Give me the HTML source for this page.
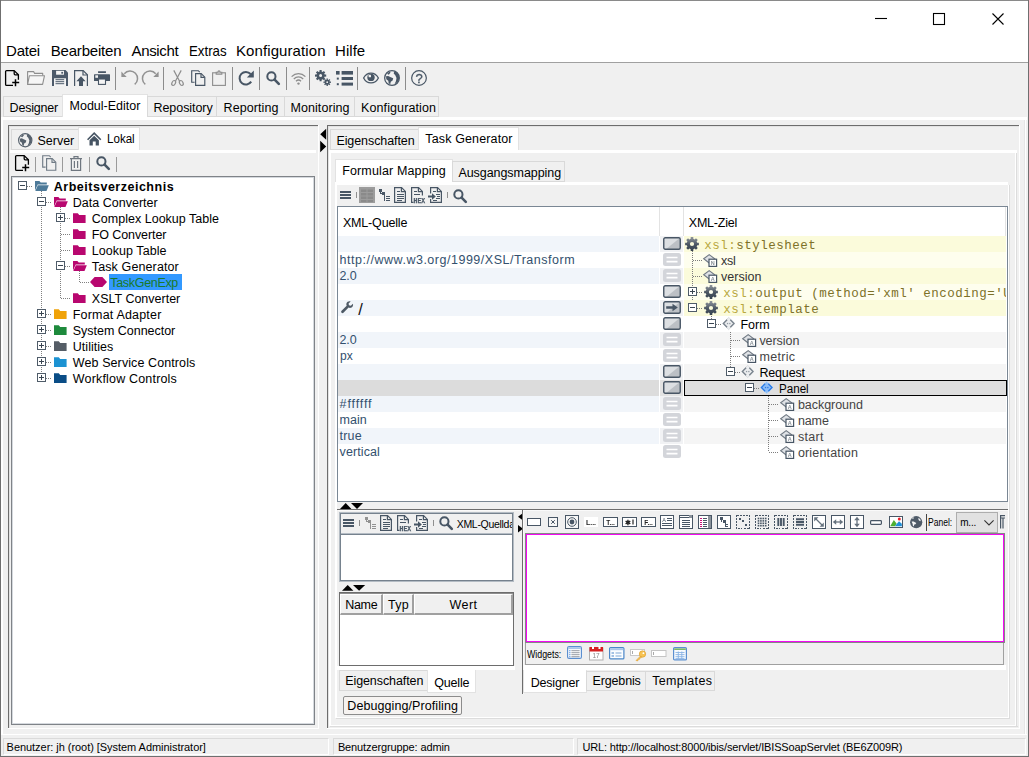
<!DOCTYPE html>
<html><head><meta charset="utf-8"><title>Modul-Editor</title>
<style>
*{box-sizing:border-box;margin:0;padding:0}
html,body{width:1029px;height:757px;overflow:hidden;background:#f0f0f0}
body{font-family:"Liberation Sans",sans-serif;font-size:12.5px;color:#000;position:relative}
.a{position:absolute}
.t{position:absolute;white-space:pre}
svg{position:absolute;overflow:visible}
</style></head><body>
<div class="a" style="left:0px;top:0px;width:1029px;height:62px;background:#fff;"></div><div class="a" style="left:0px;top:62px;width:1029px;height:1px;background:#a0a0a0;"></div><svg style="left:870px;top:8px" width="140" height="22" viewBox="870 8 140 22"><g stroke="#000" stroke-width="1.1" fill="none"><path d="M875 18.5H887"/><rect x="933.5" y="13.5" width="11" height="11"/><path d="M992.5 13.5l11 11M1003.5 13.5l-11 11"/></g></svg><span class="t" id="t0" style="left:6.1px;top:42.70px;font-size:15px;line-height:15px;color:#000;letter-spacing:-0.258px;">Datei</span><span class="t" id="t1" style="left:50.8px;top:42.70px;font-size:15px;line-height:15px;color:#000;letter-spacing:-0.207px;">Bearbeiten</span><span class="t" id="t2" style="left:131.5px;top:42.70px;font-size:15px;line-height:15px;color:#000;letter-spacing:-0.334px;">Ansicht</span><span class="t" id="t3" style="left:188.9px;top:42.70px;font-size:15px;line-height:15px;color:#000;transform:scaleX(0.8844);transform-origin:0 0;">Extras</span><span class="t" id="t4" style="left:236px;top:42.70px;font-size:15px;line-height:15px;color:#000;letter-spacing:0.091px;">Konfiguration</span><span class="t" id="t5" style="left:335px;top:42.70px;font-size:15px;line-height:15px;color:#000;letter-spacing:0.046px;">Hilfe</span><svg style="left:5px;top:70px;" width="15" height="17" viewBox="0 0 15 17"><g fill="none" stroke="#000" stroke-width="1.3" stroke-linejoin="round"><path d="M8 15.400H1.600a1 1 0 0 1-1-1V1.600a1 1 0 0 1 1-1h7.600l4.200 4.200v4.900"/><path d="M9.200.8v3a1 1 0 0 0 1 1h3"/><path d="M7.200 12.500h7M10.500 9.300v6.900" stroke-width="1.500"/></g></svg><svg style="left:27px;top:71px;" width="18" height="14" viewBox="0 0 18 14"><g fill="#f6f6f6" stroke="#8e8e8e" stroke-width="1.100" stroke-linejoin="round"><path d="M.6 13.400V.6h6l1 1.800h8.100v2.400"/><path d="M.6 13.400L2.400 4.700h15.100L15.600 13.400z"/></g></svg><svg style="left:52px;top:70px;" width="16" height="16" viewBox="0 0 16 16"><path d="M0 0h13.500L16 2.500V16H0z" fill="#4c5a6a"/><rect x="4.100" y=".8" width="7.900" height="3.900" fill="#f4f4f4"/><rect x="9.300" y="1.900" width="1.800" height="1.800" fill="#4c5a6a"/><rect x="2" y="8.300" width="12" height="7.700" fill="#f4f4f4"/><path d="M3.500 9.700h8.700M3.500 11.700h8.700M3.500 13.700h8.700" stroke="#4c5a6a" stroke-width="1"/></svg><svg style="left:74px;top:70px;" width="14" height="16" viewBox="0 0 14 16"><g fill="none" stroke="#485665" stroke-width="1.2"><path d="M.6 16V.6h8.6l4.2 4.2V16"/><path d="M9 .8v4.2h4.2"/></g><path d="M7 6.2l4.6 5H9V16H5v-4.8H2.4z" fill="#485665"/></svg><svg style="left:94px;top:71px;" width="16" height="14" viewBox="0 0 16 14"><rect x="4" y=".2" width="8" height="1.800" rx=".4" fill="#485665"/><rect x="0" y="3.200" width="16" height="6.900" rx=".6" fill="#485665"/><rect x="1.300" y="4.300" width="2.700" height="2.500" fill="#f0f0f0"/><rect x="4.500" y="8" width="7" height="5.400" fill="#f4f4f4" stroke="#485665" stroke-width="1.100"/></svg><div class="a" style="left:115px;top:67px;width:1px;height:23px;background:#8c8c8c;"></div><svg style="left:120.5px;top:70px;" width="17" height="16" viewBox="0 0 17 16"><g><path d="M3.300 3.700A7.500 7.500 0 1 1 13.700 14.400" fill="none" stroke="#929292" stroke-width="1.500"/><path d="M.4 1.400V7.100H5.700z" fill="#929292"/></g></svg><svg style="left:141.5px;top:70px;" width="17" height="16" viewBox="0 0 17 16"><g transform="translate(17,0) scale(-1,1)"><path d="M3.300 3.700A7.500 7.500 0 1 1 13.700 14.400" fill="none" stroke="#929292" stroke-width="1.500"/><path d="M.4 1.400V7.100H5.700z" fill="#929292"/></g></svg><div class="a" style="left:163px;top:67px;width:1px;height:23px;background:#8c8c8c;"></div><svg style="left:171px;top:70px;" width="13" height="16" viewBox="0 0 13 16"><g fill="none" stroke="#8e8e8e" stroke-width="1.200"><path d="M2.800.4L8.600 11.200M10.200.4L4.400 11.200"/><ellipse cx="2.700" cy="13" rx="1.700" ry="2.600" transform="rotate(28 2.700 13)"/><ellipse cx="10.300" cy="13" rx="1.700" ry="2.600" transform="rotate(-28 10.300 13)"/></g></svg><svg style="left:191px;top:70px;" width="15" height="16" viewBox="0 0 15 16" preserveAspectRatio="none"><g fill="none" stroke="#485665" stroke-width="1.150"><path d="M3.6 12.2H.7V.7h6.6l1.4 1.4"/><path d="M4.6 15.3V3.6h5.6l3.6 3.6v8.1z"/><path d="M10 3.8v3.6h3.6"/></g></svg><svg style="left:212px;top:70px;" width="14" height="16" viewBox="0 0 14 16"><g fill="none" stroke="#909090" stroke-width="1.150"><rect x=".6" y="2.800" width="12.800" height="12.600"/><path d="M4.200 4.200V2.200h1.600C6 .4 8 .4 8.200 2.200h1.600v2z" fill="#c4c4c4"/></g></svg><div class="a" style="left:232px;top:67px;width:1px;height:23px;background:#8c8c8c;"></div><svg style="left:238px;top:70.3px;" width="16" height="16" viewBox="0 0 16 16"><path d="M13.2 11.6A6.3 6.3 0 1 1 12.6 4" fill="none" stroke="#485665" stroke-width="2"/><path d="M15.8.4v7H8.8z" fill="#485665"/></svg><div class="a" style="left:259px;top:67px;width:1px;height:23px;background:#8c8c8c;"></div><svg style="left:266px;top:70.5px;" width="14" height="14" viewBox="0 0 14 14"><svg viewBox="0 0 14 14" width="14" height="14" style="position:static"><circle cx="5.4" cy="5.4" r="4.1" fill="none" stroke="#485665" stroke-width="2"/><path d="M8.6 8.6l4.2 4.2" stroke="#485665" stroke-width="2.6" stroke-linecap="round"/></svg></svg><div class="a" style="left:286px;top:67px;width:1px;height:23px;background:#8c8c8c;"></div><svg style="left:291px;top:71.5px;" width="15" height="13" viewBox="0 0 15 13"><g fill="none" stroke="#8e8e8e" stroke-width="1.300"><path d="M.6 4.600C4.600.6 10.400.6 14.400 4.600"/><path d="M2.800 7C5.600 4.200 9.400 4.200 12.200 7"/><path d="M5 9.200c1.600-1.600 3.400-1.600 5 0"/></g><circle cx="7.500" cy="11.600" r="1.200" fill="#8e8e8e"/></svg><div class="a" style="left:309px;top:67px;width:1px;height:23px;background:#8c8c8c;"></div><svg style="left:314.5px;top:70px;" width="16" height="16" viewBox="0 0 16 16"><path d="M11.20 4.53L11.20 6.67L9.68 6.61L9.20 7.77L10.31 8.80L8.80 10.31L7.77 9.20L6.61 9.68L6.67 11.20L4.53 11.20L4.59 9.68L3.43 9.20L2.40 10.31L0.89 8.80L2.00 7.77L1.52 6.61L0.00 6.67L0.00 4.53L1.52 4.59L2.00 3.43L0.89 2.40L2.40 0.89L3.43 2.00L4.59 1.52L4.53 0.00L6.67 0.00L6.61 1.52L7.77 2.00L8.80 0.89L10.31 2.40L9.20 3.43L9.68 4.59zM4.10 5.60a1.50 1.50 0 1 0 3.00 0a1.50 1.50 0 1 0 -3.00 0z" fill="#485665" fill-rule="evenodd"/><path d="M15.93 11.49L15.93 12.91L14.72 12.83L14.43 13.54L15.34 14.34L14.34 15.34L13.54 14.43L12.83 14.72L12.91 15.93L11.49 15.93L11.57 14.72L10.86 14.43L10.06 15.34L9.06 14.34L9.97 13.54L9.68 12.83L8.47 12.91L8.47 11.49L9.68 11.57L9.97 10.86L9.06 10.06L10.06 9.06L10.86 9.97L11.57 9.68L11.49 8.47L12.91 8.47L12.83 9.68L13.54 9.97L14.34 9.06L15.34 10.06L14.43 10.86L14.72 11.57zM11.30 12.20a0.90 0.90 0 1 0 1.80 0a0.90 0.90 0 1 0 -1.80 0z" fill="#485665" fill-rule="evenodd"/></svg><svg style="left:336px;top:71px;" width="17" height="15" viewBox="0 0 17 15"><g fill="#485665"><rect x="0" y="0" width="3.6" height="3.6"/><rect x="5.6" y="0" width="11.4" height="3.6"/><rect x=".8" y="6.6" width="2" height="2"/><rect x="5.6" y="6" width="11.4" height="3"/><rect x=".8" y="12.2" width="2" height="2"/><rect x="5.6" y="11.6" width="11.4" height="3"/></g></svg><div class="a" style="left:357px;top:67px;width:1px;height:23px;background:#8c8c8c;"></div><svg style="left:363px;top:71.8px;" width="16" height="12" viewBox="0 0 16 12"><path d="M.6 6C4-.6 12-.6 15.400 6 12 12.600 4 12.600.6 6z" fill="#f0f0f0" stroke="#485665" stroke-width="1.300"/><circle cx="8" cy="5.400" r="3.700" fill="#485665"/><rect x="5.600" y="2.800" width="2.400" height="2.400" rx=".5" fill="#f0f0f0"/></svg><svg style="left:384px;top:70px;" width="16" height="16" viewBox="0 0 16 16"><svg viewBox="0 0 16 16" width="16" height="16" style="position:static"><circle cx="8" cy="8" r="7.350" fill="#f0f0f0" stroke="#485665" stroke-width="1.250"/><path d="M3 3.800L5.400 1.700 6.600 2.600 4.800 4.700z" fill="#485665"/><path d="M2 6.300L4.200 5.900 6.200 7 9.200 8.200 8.600 10.400 6.800 11.700 6.200 14.300 4.700 13.300 4.300 10.700 2.300 9.300z" fill="#485665"/><path d="M10.200 1.200L9.700 3.500 11.300 5.300 12.500 8 12 11 10.400 14.400C13.400 12.800 15.200 10.800 15.200 8 15.200 4.800 13.200 2.200 10.200 1.200z" fill="#485665"/></svg></svg><div class="a" style="left:405px;top:67px;width:1px;height:23px;background:#8c8c8c;"></div><svg style="left:411.4px;top:70px;will-change:transform" width="16" height="16" viewBox="0 0 16 16"><circle cx="8" cy="8" r="7.350" fill="none" stroke="#485665" stroke-width="1.200"/><text x="8" y="12.700" text-anchor="middle" font-family="Liberation Sans,sans-serif" font-size="13" fill="#485665" stroke="#485665" stroke-width=".3">?</text></svg><div class="a" style="left:1px;top:117px;width:1026px;height:3px;background:#fff;"></div><div class="a" style="left:1px;top:117px;width:2px;height:618px;background:#fff;"></div><div class="a" style="left:1024px;top:120px;width:1px;height:615px;background:#e6e6e6;"></div><div class="a" style="left:1025px;top:117px;width:1px;height:618px;background:#fff;"></div><div class="a" style="left:1px;top:734px;width:1026px;height:1px;background:#fff;"></div><div class="a" style="left:3px;top:96px;width:60px;height:21px;background:#f0f0f0;border:1px solid #d9d9d9;"></div><span class="t" id="t6" style="left:9.6px;top:102.12px;font-size:12.5px;line-height:12.5px;color:#000;letter-spacing:-0.204px;">Designer</span><div class="a" style="left:62px;top:94px;width:86px;height:23px;background:#fff;border:1px solid #e2e2e2;border-bottom:none;"></div><span class="t" id="t7" style="left:69.5px;top:99.92px;font-size:12.5px;line-height:12.5px;color:#000;letter-spacing:0.011px;">Modul-Editor</span><div class="a" style="left:147px;top:96px;width:70px;height:21px;background:#f0f0f0;border:1px solid #d9d9d9;"></div><span class="t" id="t8" style="left:153.5px;top:102.12px;font-size:12.5px;line-height:12.5px;color:#000;letter-spacing:-0.061px;">Repository</span><div class="a" style="left:216px;top:96px;width:69px;height:21px;background:#f0f0f0;border:1px solid #d9d9d9;"></div><span class="t" id="t9" style="left:223.5px;top:102.12px;font-size:12.5px;line-height:12.5px;color:#000;letter-spacing:0.100px;">Reporting</span><div class="a" style="left:284px;top:96px;width:71px;height:21px;background:#f0f0f0;border:1px solid #d9d9d9;"></div><span class="t" id="t10" style="left:290.5px;top:102.12px;font-size:12.5px;line-height:12.5px;color:#000;letter-spacing:0.069px;">Monitoring</span><div class="a" style="left:354px;top:96px;width:85px;height:21px;background:#f0f0f0;border:1px solid #d9d9d9;"></div><span class="t" id="t11" style="left:361px;top:102.12px;font-size:12.5px;line-height:12.5px;color:#000;letter-spacing:0.111px;">Konfiguration</span><div class="a" style="left:8px;top:125px;width:311px;height:1px;background:#6d6d6d;"></div><div class="a" style="left:8px;top:125px;width:1px;height:604px;background:#6d6d6d;"></div><div class="a" style="left:9px;top:126px;width:309px;height:1px;background:#e3e3e3;"></div><div class="a" style="left:9px;top:126px;width:1px;height:602px;background:#e3e3e3;"></div><div class="a" style="left:8px;top:728px;width:311px;height:1px;background:#fff;"></div><div class="a" style="left:318px;top:125px;width:1px;height:604px;background:#fff;"></div><div class="a" style="left:10px;top:150px;width:306px;height:3px;background:#fff;"></div><div class="a" style="left:11px;top:129px;width:68px;height:21px;background:#f0f0f0;border:1px solid #d9d9d9;"></div><svg style="left:18px;top:133px;" width="14.5" height="14.5" viewBox="0 0 14.5 14.5"><svg viewBox="0 0 16 16" width="14.5" height="14.5" style="position:static"><circle cx="8" cy="8" r="7.350" fill="#f0f0f0" stroke="#56616d" stroke-width="1.250"/><path d="M3 3.800L5.400 1.700 6.600 2.600 4.800 4.700z" fill="#56616d"/><path d="M2 6.300L4.200 5.900 6.200 7 9.200 8.200 8.600 10.400 6.800 11.700 6.200 14.300 4.700 13.300 4.300 10.700 2.300 9.300z" fill="#56616d"/><path d="M10.200 1.200L9.700 3.500 11.300 5.300 12.500 8 12 11 10.400 14.400C13.400 12.800 15.200 10.800 15.200 8 15.200 4.800 13.200 2.200 10.200 1.200z" fill="#56616d"/></svg></svg><span class="t" id="t12" style="left:37.4px;top:135.32px;font-size:12.5px;line-height:12.5px;color:#000;letter-spacing:0.014px;">Server</span><div class="a" style="left:78px;top:127px;width:62px;height:23px;background:#fff;border:1px solid #e2e2e2;border-bottom:none;"></div><svg style="left:87px;top:131.7px;" width="14.4" height="13.4" viewBox="0 0 14.4 13.4"><path d="M.6 7.700L7.200 1.100l6.600 6.600" fill="none" stroke="#465463" stroke-width="1.600"/><path d="M2.500 8.300L7.200 3.700l4.700 4.600v5.100H8.700V9.400H5.800v4H2.500z" fill="#465463"/></svg><span class="t" id="t13" style="left:106.6px;top:133.42px;font-size:12.5px;line-height:12.5px;color:#000;transform:scaleX(0.9267);transform-origin:0 0;">Lokal</span><svg style="left:15px;top:155px;" width="15" height="17" viewBox="0 0 15 17"><g fill="none" stroke="#000" stroke-width="1.3" stroke-linejoin="round"><path d="M8 15.400H1.600a1 1 0 0 1-1-1V1.600a1 1 0 0 1 1-1h7.600l4.200 4.200v4.900"/><path d="M9.200.8v3a1 1 0 0 0 1 1h3"/><path d="M7.200 12.500h7M10.500 9.300v6.900" stroke-width="1.500"/></g></svg><div class="a" style="left:35px;top:157px;width:1px;height:15px;background:#9a9a9a;"></div><svg style="left:42px;top:155px;" width="14.4" height="15.36" viewBox="0 0 14.4 15.36" preserveAspectRatio="none"><g fill="none" stroke="#707b86" stroke-width="1.150"><path d="M3.6 12.2H.7V.7h6.6l1.4 1.4"/><path d="M4.6 15.3V3.6h5.6l3.6 3.6v8.1z"/><path d="M10 3.8v3.6h3.6"/></g></svg><div class="a" style="left:62px;top:157px;width:1px;height:15px;background:#9a9a9a;"></div><svg style="left:70px;top:155.5px;" width="12" height="15" viewBox="0 0 12 15"><g fill="none" stroke="#6f7780" stroke-width="1.200"><path d="M0 2.600h12M4 2.400V.6h4v1.800"/><path d="M1.400 2.800v11.600h9.200V2.800"/><path d="M4.400 5v7M7.600 5v7"/></g></svg><div class="a" style="left:89px;top:157px;width:1px;height:15px;background:#9a9a9a;"></div><svg style="left:96px;top:155.5px;" width="14" height="14" viewBox="0 0 14 14"><svg viewBox="0 0 14 14" width="14" height="14" style="position:static"><circle cx="5.4" cy="5.4" r="4.1" fill="none" stroke="#485665" stroke-width="2"/><path d="M8.6 8.6l4.2 4.2" stroke="#485665" stroke-width="2.6" stroke-linecap="round"/></svg></svg><div class="a" style="left:116px;top:157px;width:1px;height:15px;background:#9a9a9a;"></div><div class="a" style="left:11px;top:176px;width:304px;height:549px;background:#fff;border:1px solid #7f8388;"></div><div class="a" style="left:12px;top:177px;width:302px;height:547px;border:1px solid #d5d9de;"></div><div class="a" style="left:41px;top:191px;width:1px;height:187px;background-image:repeating-linear-gradient(180deg,#808080 0 1px,transparent 1px 2px);"></div><div class="a" style="left:60px;top:207px;width:1px;height:91px;background-image:repeating-linear-gradient(180deg,#808080 0 1px,transparent 1px 2px);"></div><div class="a" style="left:79px;top:271px;width:1px;height:11px;background-image:repeating-linear-gradient(180deg,#808080 0 1px,transparent 1px 2px);"></div><div class="a" style="left:27px;top:186px;width:6px;height:1px;background-image:repeating-linear-gradient(90deg,#808080 0 1px,transparent 1px 2px);"></div><svg style="left:34.5px;top:181px;" width="14" height="10" viewBox="0 0 14 10"><path d="M0 9.600V0h4.400l1.300 1.600h6.100V3.500H2.700z" fill="#4d7a99"/><path d="M.3 10L2.800 4.300h11L11.500 10z" fill="#4d7a99"/></svg><span class="t" id="t14" style="left:53.8px;top:180.92px;font-size:12.5px;line-height:12.5px;color:#000;font-weight:bold;letter-spacing:0.508px;">Arbeitsverzeichnis</span><div class="a" style="left:46px;top:202px;width:6px;height:1px;background-image:repeating-linear-gradient(90deg,#808080 0 1px,transparent 1px 2px);"></div><svg style="left:53.5px;top:197px;" width="14" height="10" viewBox="0 0 14 10"><path d="M0 9.600V0h4.400l1.300 1.600h6.100V3.500H2.700z" fill="#b8076f"/><path d="M.3 10L2.800 4.300h11L11.500 10z" fill="#b8076f"/></svg><span class="t" id="t15" style="left:72.8px;top:196.92px;font-size:12.5px;line-height:12.5px;color:#000;letter-spacing:0.010px;">Data Converter</span><div class="a" style="left:65px;top:218px;width:6px;height:1px;background-image:repeating-linear-gradient(90deg,#808080 0 1px,transparent 1px 2px);"></div><svg style="left:72.7px;top:213px;" width="12.6" height="10" viewBox="0 0 12.6 10"><path d="M0 .3h4.800l1.400 1.700h6.400V10H0z" fill="#b8076f"/></svg><span class="t" id="t16" style="left:91.8px;top:212.92px;font-size:12.5px;line-height:12.5px;color:#000;letter-spacing:0.014px;">Complex Lookup Table</span><div class="a" style="left:61px;top:234px;width:10px;height:1px;background-image:repeating-linear-gradient(90deg,#808080 0 1px,transparent 1px 2px);"></div><svg style="left:72.7px;top:229px;" width="12.6" height="10" viewBox="0 0 12.6 10"><path d="M0 .3h4.800l1.400 1.700h6.400V10H0z" fill="#b8076f"/></svg><span class="t" id="t17" style="left:91.8px;top:228.92px;font-size:12.5px;line-height:12.5px;color:#000;letter-spacing:-0.102px;">FO Converter</span><div class="a" style="left:61px;top:250px;width:10px;height:1px;background-image:repeating-linear-gradient(90deg,#808080 0 1px,transparent 1px 2px);"></div><svg style="left:72.7px;top:245px;" width="12.6" height="10" viewBox="0 0 12.6 10"><path d="M0 .3h4.800l1.400 1.700h6.400V10H0z" fill="#b8076f"/></svg><span class="t" id="t18" style="left:91.8px;top:244.92px;font-size:12.5px;line-height:12.5px;color:#000;letter-spacing:0.042px;">Lookup Table</span><div class="a" style="left:65px;top:266px;width:6px;height:1px;background-image:repeating-linear-gradient(90deg,#808080 0 1px,transparent 1px 2px);"></div><svg style="left:72.5px;top:261px;" width="14" height="10" viewBox="0 0 14 10"><path d="M0 9.600V0h4.400l1.300 1.600h6.100V3.500H2.700z" fill="#b8076f"/><path d="M.3 10L2.800 4.300h11L11.500 10z" fill="#b8076f"/></svg><span class="t" id="t19" style="left:91.8px;top:260.92px;font-size:12.5px;line-height:12.5px;color:#000;letter-spacing:0.118px;">Task Generator</span><div class="a" style="left:80px;top:282px;width:9px;height:1px;background-image:repeating-linear-gradient(90deg,#808080 0 1px,transparent 1px 2px);"></div><svg style="left:90px;top:277px;" width="17" height="10" viewBox="0 0 17 10"><path d="M0 5L4.600 0h7.800L17 5l-4.600 5H4.600z" fill="#b8076f"/></svg><div class="a" style="left:109px;top:274px;width:73px;height:16px;background:#3399ff;"></div><span class="t" id="t20" style="left:110.3px;top:276.92px;font-size:12.5px;line-height:12.5px;color:#1a7a2a;letter-spacing:-0.319px;">TaskGenExp</span><div class="a" style="left:61px;top:298px;width:10px;height:1px;background-image:repeating-linear-gradient(90deg,#808080 0 1px,transparent 1px 2px);"></div><svg style="left:72.7px;top:293px;" width="12.6" height="10" viewBox="0 0 12.6 10"><path d="M0 .3h4.800l1.400 1.700h6.400V10H0z" fill="#b8076f"/></svg><span class="t" id="t21" style="left:91.8px;top:292.92px;font-size:12.5px;line-height:12.5px;color:#000;">XSLT Converter</span><div class="a" style="left:46px;top:314px;width:6px;height:1px;background-image:repeating-linear-gradient(90deg,#808080 0 1px,transparent 1px 2px);"></div><svg style="left:53.7px;top:309px;" width="12.6" height="10" viewBox="0 0 12.6 10"><path d="M0 .3h4.800l1.400 1.700h6.400V10H0z" fill="#f0a30a"/></svg><span class="t" id="t22" style="left:72.8px;top:308.92px;font-size:12.5px;line-height:12.5px;color:#000;letter-spacing:0.180px;">Format Adapter</span><div class="a" style="left:46px;top:330px;width:6px;height:1px;background-image:repeating-linear-gradient(90deg,#808080 0 1px,transparent 1px 2px);"></div><svg style="left:53.7px;top:325px;" width="12.6" height="10" viewBox="0 0 12.6 10"><path d="M0 .3h4.800l1.400 1.700h6.400V10H0z" fill="#1e8a3c"/></svg><span class="t" id="t23" style="left:72.8px;top:324.92px;font-size:12.5px;line-height:12.5px;color:#000;letter-spacing:-0.022px;">System Connector</span><div class="a" style="left:46px;top:346px;width:6px;height:1px;background-image:repeating-linear-gradient(90deg,#808080 0 1px,transparent 1px 2px);"></div><svg style="left:53.7px;top:341px;" width="12.6" height="10" viewBox="0 0 12.6 10"><path d="M0 .3h4.800l1.400 1.700h6.400V10H0z" fill="#555d66"/></svg><span class="t" id="t24" style="left:72.8px;top:340.92px;font-size:12.5px;line-height:12.5px;color:#000;letter-spacing:0.025px;">Utilities</span><div class="a" style="left:46px;top:362px;width:6px;height:1px;background-image:repeating-linear-gradient(90deg,#808080 0 1px,transparent 1px 2px);"></div><svg style="left:53.7px;top:357px;" width="12.6" height="10" viewBox="0 0 12.6 10"><path d="M0 .3h4.800l1.400 1.700h6.400V10H0z" fill="#1c92d2"/></svg><span class="t" id="t25" style="left:72.8px;top:356.92px;font-size:12.5px;line-height:12.5px;color:#000;letter-spacing:0.097px;">Web Service Controls</span><div class="a" style="left:46px;top:378px;width:6px;height:1px;background-image:repeating-linear-gradient(90deg,#808080 0 1px,transparent 1px 2px);"></div><svg style="left:53.7px;top:373px;" width="12.6" height="10" viewBox="0 0 12.6 10"><path d="M0 .3h4.800l1.400 1.700h6.400V10H0z" fill="#0a4d86"/></svg><span class="t" id="t26" style="left:72.8px;top:372.92px;font-size:12.5px;line-height:12.5px;color:#000;letter-spacing:0.176px;">Workflow Controls</span><svg style="left:18px;top:181px;" width="9" height="9" viewBox="0 0 9 9" shape-rendering="crispEdges"><rect x=".5" y=".5" width="8" height="8" fill="#fff" stroke="#4f5c69"/><path d="M2 4.500h5" stroke="#3a4652"/></svg><svg style="left:37px;top:197px;" width="9" height="9" viewBox="0 0 9 9" shape-rendering="crispEdges"><rect x=".5" y=".5" width="8" height="8" fill="#fff" stroke="#4f5c69"/><path d="M2 4.500h5" stroke="#3a4652"/></svg><svg style="left:56px;top:213px;" width="9" height="9" viewBox="0 0 9 9" shape-rendering="crispEdges"><rect x=".5" y=".5" width="8" height="8" fill="#fff" stroke="#4f5c69"/><path d="M2 4.500h5" stroke="#3a4652"/><path d="M4.500 2v5" stroke="#3a4652"/></svg><svg style="left:56px;top:261px;" width="9" height="9" viewBox="0 0 9 9" shape-rendering="crispEdges"><rect x=".5" y=".5" width="8" height="8" fill="#fff" stroke="#4f5c69"/><path d="M2 4.500h5" stroke="#3a4652"/></svg><svg style="left:37px;top:309px;" width="9" height="9" viewBox="0 0 9 9" shape-rendering="crispEdges"><rect x=".5" y=".5" width="8" height="8" fill="#fff" stroke="#4f5c69"/><path d="M2 4.500h5" stroke="#3a4652"/><path d="M4.500 2v5" stroke="#3a4652"/></svg><svg style="left:37px;top:325px;" width="9" height="9" viewBox="0 0 9 9" shape-rendering="crispEdges"><rect x=".5" y=".5" width="8" height="8" fill="#fff" stroke="#4f5c69"/><path d="M2 4.500h5" stroke="#3a4652"/><path d="M4.500 2v5" stroke="#3a4652"/></svg><svg style="left:37px;top:341px;" width="9" height="9" viewBox="0 0 9 9" shape-rendering="crispEdges"><rect x=".5" y=".5" width="8" height="8" fill="#fff" stroke="#4f5c69"/><path d="M2 4.500h5" stroke="#3a4652"/><path d="M4.500 2v5" stroke="#3a4652"/></svg><svg style="left:37px;top:357px;" width="9" height="9" viewBox="0 0 9 9" shape-rendering="crispEdges"><rect x=".5" y=".5" width="8" height="8" fill="#fff" stroke="#4f5c69"/><path d="M2 4.500h5" stroke="#3a4652"/><path d="M4.500 2v5" stroke="#3a4652"/></svg><svg style="left:37px;top:373px;" width="9" height="9" viewBox="0 0 9 9" shape-rendering="crispEdges"><rect x=".5" y=".5" width="8" height="8" fill="#fff" stroke="#4f5c69"/><path d="M2 4.500h5" stroke="#3a4652"/><path d="M4.500 2v5" stroke="#3a4652"/></svg><svg style="left:319px;top:126px" width="8" height="30" viewBox="319 126 8 30"><path d="M326.200 128.800V139.800L320.200 134.300zM320.200 140.800V152.200L326.200 146.500z" fill="#000"/></svg><div class="a" style="left:327px;top:125px;width:693px;height:1px;background:#6d6d6d;"></div><div class="a" style="left:327px;top:125px;width:1px;height:604px;background:#6d6d6d;"></div><div class="a" style="left:328px;top:126px;width:691px;height:1px;background:#e3e3e3;"></div><div class="a" style="left:328px;top:126px;width:1px;height:602px;background:#e3e3e3;"></div><div class="a" style="left:327px;top:728px;width:693px;height:1px;background:#fff;"></div><div class="a" style="left:1019px;top:125px;width:1px;height:604px;background:#fff;"></div><div class="a" style="left:329px;top:150px;width:688px;height:3px;background:#fff;"></div><div class="a" style="left:329px;top:150px;width:2px;height:575px;background:#fff;"></div><div class="a" style="left:329px;top:725px;width:688px;height:1px;background:#fff;"></div><div class="a" style="left:330px;top:726px;width:688px;height:1px;background:#dcdcdc;"></div><div class="a" style="left:1015px;top:153px;width:1px;height:573px;background:#fff;"></div><div class="a" style="left:1016px;top:153px;width:1px;height:574px;background:#dcdcdc;"></div><div class="a" style="left:330px;top:129px;width:89px;height:21px;background:#f0f0f0;border:1px solid #d9d9d9;"></div><span class="t" id="t27" style="left:336.4px;top:135.12px;font-size:12.5px;line-height:12.5px;color:#000;letter-spacing:-0.078px;">Eigenschaften</span><div class="a" style="left:418px;top:127px;width:101px;height:23px;background:#fff;border:1px solid #e2e2e2;border-bottom:none;"></div><span class="t" id="t28" style="left:425.3px;top:133.12px;font-size:12.5px;line-height:12.5px;color:#000;letter-spacing:0.133px;">Task Generator</span><div class="a" style="left:335px;top:182px;width:673px;height:3px;background:#fff;"></div><div class="a" style="left:335px;top:182px;width:2px;height:536px;background:#fff;"></div><div class="a" style="left:335px;top:717px;width:674px;height:1px;background:#fff;"></div><div class="a" style="left:336px;top:718px;width:674px;height:1px;background:#dcdcdc;"></div><div class="a" style="left:1008px;top:185px;width:1px;height:533px;background:#fff;"></div><div class="a" style="left:1009px;top:185px;width:1px;height:534px;background:#dcdcdc;"></div><div class="a" style="left:335px;top:159px;width:118px;height:23px;background:#fff;border:1px solid #e2e2e2;border-bottom:none;"></div><span class="t" id="t29" style="left:342.2px;top:164.92px;font-size:12.5px;line-height:12.5px;color:#000;letter-spacing:0.144px;">Formular Mapping</span><div class="a" style="left:452px;top:161px;width:113px;height:21px;background:#f0f0f0;border:1px solid #d9d9d9;"></div><span class="t" id="t30" style="left:458.4px;top:167.22px;font-size:12.5px;line-height:12.5px;color:#000;letter-spacing:-0.053px;">Ausgangsmapping</span><svg style="left:340px;top:191px;" width="10.5" height="8" viewBox="0 0 10.5 8" shape-rendering="crispEdges"><path d="M0 1h10.500M0 4h10.500M0 7h10.500" stroke="#485665" stroke-width="2"/></svg><div class="a" style="left:356px;top:192px;width:1px;height:6px;background:#909090;"></div><svg style="left:359px;top:187px;" width="16" height="16" viewBox="0 0 16 16"><rect x="0" y="0" width="16" height="16" fill="#9c9c9c"/><g fill="#8a8a8a"><rect x="2" y="2.500" width="5.500" height="2.500"/><rect x="8.500" y="2.500" width="5.500" height="2.500"/><rect x="2" y="6" width="5.500" height="2.500"/><rect x="8.500" y="6" width="5.500" height="2.500"/><rect x="2" y="9.500" width="5.500" height="2.500"/><rect x="8.500" y="9.500" width="5.500" height="2.500"/><rect x="2" y="13" width="5.500" height="2"/><rect x="8.500" y="13" width="5.500" height="2"/></g></svg><svg style="left:379px;top:189px;" width="11" height="12" viewBox="0 0 11 12"><g fill="#485665" shape-rendering="crispEdges"><rect x="0" y="0" width="3" height="3"/><rect x="3" y="3" width="3" height="3"/><path d="M1 3h1v2H1zM2 4h1v1H2zM5 6h1v6H5z"/><path d="M7 7h1.600v1H7zM9.400 7H11v1H9.400zM7 9h1.600v1H7zM9.400 9H11v1H9.400zM7 11h1.600v1H7zM9.400 11H11v1H9.400z"/></g></svg><svg style="left:394px;top:187px;" width="12" height="16" viewBox="0 0 12 16"><g fill="none" stroke="#485665" stroke-width="1.200"><path d="M.6 15.400V.6h7l3.800 3.800v11z"/><path d="M7.400.8v3.800h3.800"/></g><path d="M3 4.500h3M3 7.500h6.500M3 9.500h6.500M3 11.500h6.500M3 13.500h4.500" stroke="#485665" stroke-width="1" shape-rendering="crispEdges"/></svg><svg style="left:411px;top:187px;will-change:transform;" width="14" height="16" viewBox="0 0 14 16"><g fill="none" stroke="#485665" stroke-width="1.200"><path d="M2.500 15.400H.6V.6h7l3.800 3.800v4"/><path d="M7.400.8v3.800h3.800"/></g><path d="M3 4.500h3M3 7.500h6" stroke="#485665" stroke-width="1" shape-rendering="crispEdges"/><text x="2.600" y="15.600" font-family="Liberation Mono,monospace" font-size="7" font-weight="bold" fill="#485665" stroke="#485665" stroke-width=".25" textLength="11.400" lengthAdjust="spacingAndGlyphs">HEX</text></svg><svg style="left:428px;top:187px;" width="14" height="16" viewBox="0 0 14 16"><g fill="none" stroke="#485665" stroke-width="1.200"><path d="M2.600 6.500V.6h7l3.800 3.800v11H2.600v-3.500"/><path d="M9.400.8v3.800h3.800"/></g><path d="M5 4.500h3M8 7.500h3.500M9 9.500h2.500M8 11.500h3.500M5 13.500h4" stroke="#485665" stroke-width="1" shape-rendering="crispEdges"/><path d="M0 8.500h4V6.200l3.800 3.300L4 12.800V10.500H0z" fill="#485665"/></svg><div class="a" style="left:447px;top:192px;width:1px;height:6px;background:#909090;"></div><svg style="left:453px;top:188.5px;" width="14" height="14" viewBox="0 0 14 14"><svg viewBox="0 0 14 14" width="14" height="14" style="position:static"><circle cx="5.4" cy="5.4" r="4.1" fill="none" stroke="#485665" stroke-width="2"/><path d="M8.6 8.6l4.2 4.2" stroke="#485665" stroke-width="2.6" stroke-linecap="round"/></svg></svg><div class="a" style="left:337px;top:206px;width:671px;height:296px;background:#fff;border:1px solid #7a8794;"></div><div class="a" style="left:659px;top:207px;width:1px;height:29px;background:#e3e3e3;"></div><div class="a" style="left:683px;top:207px;width:1px;height:29px;background:#e3e3e3;"></div><div class="a" style="left:1005px;top:207px;width:1px;height:29px;background:#e3e3e3;"></div><span class="t" id="t31" style="left:342.9px;top:217.32px;font-size:12.5px;line-height:12.5px;color:#000;letter-spacing:-0.167px;">XML-Quelle</span><span class="t" id="t32" style="left:688.8px;top:217.22px;font-size:12.5px;line-height:12.5px;color:#000;letter-spacing:-0.231px;">XML-Ziel</span><div class="a" style="left:338px;top:236px;width:321px;height:16px;background:#f1f5fa;"></div><div class="a" style="left:660px;top:236px;width:23px;height:16px;background:#f1f2f4;"></div><div class="a" style="left:684px;top:236px;width:322px;height:16px;background:#fbfbdb;"></div><svg style="left:663px;top:237px;" width="18" height="13" viewBox="0 0 18 13"><defs><clipPath id="cp663_237"><rect x=".75" y=".75" width="16.500" height="11.500" rx="1.500"/></clipPath></defs><g clip-path="url(#cp663_237)"><rect width="18" height="13" fill="#dcdfe2"/><path d="M18 0V13H2z" fill="#bcc0c5"/></g><rect x=".75" y=".75" width="16.500" height="11.500" rx="1.500" fill="none" stroke="#485665" stroke-width="1.400"/></svg><div class="a" style="left:684px;top:252px;width:322px;height:16px;background:#fefeee;"></div><span class="t" id="t33" style="left:339.6px;top:253.92px;font-size:12.5px;line-height:12.5px;color:#33506e;letter-spacing:0.514px;">http://www.w3.org/1999/XSL/Transform</span><svg style="left:663px;top:253px;" width="18" height="13" viewBox="0 0 18 13"><rect width="18" height="13" rx="2.500" fill="#d3d5da"/><path d="M3.500 4.500h11M3.500 8.600h11" stroke="#fff" stroke-width="1.600"/></svg><div class="a" style="left:338px;top:268px;width:321px;height:16px;background:#f1f5fa;"></div><div class="a" style="left:660px;top:268px;width:23px;height:16px;background:#f1f2f4;"></div><div class="a" style="left:684px;top:268px;width:322px;height:16px;background:#fbfbdb;"></div><span class="t" id="t34" style="left:339.6px;top:269.92px;font-size:12.5px;line-height:12.5px;color:#33506e;letter-spacing:-0.195px;">2.0</span><svg style="left:663px;top:269px;" width="18" height="13" viewBox="0 0 18 13"><rect width="18" height="13" rx="2.500" fill="#d3d5da"/><path d="M3.500 4.500h11M3.500 8.600h11" stroke="#fff" stroke-width="1.600"/></svg><div class="a" style="left:684px;top:284px;width:322px;height:16px;background:#fefeee;"></div><svg style="left:663px;top:285px;" width="18" height="13" viewBox="0 0 18 13"><defs><clipPath id="cp663_285"><rect x=".75" y=".75" width="16.500" height="11.500" rx="1.500"/></clipPath></defs><g clip-path="url(#cp663_285)"><rect width="18" height="13" fill="#dcdfe2"/><path d="M18 0V13H2z" fill="#bcc0c5"/></g><rect x=".75" y=".75" width="16.500" height="11.500" rx="1.500" fill="none" stroke="#485665" stroke-width="1.400"/></svg><div class="a" style="left:338px;top:300px;width:321px;height:16px;background:#f1f5fa;"></div><div class="a" style="left:660px;top:300px;width:23px;height:16px;background:#f1f2f4;"></div><div class="a" style="left:684px;top:300px;width:322px;height:16px;background:#fbfbdb;"></div><svg style="left:340.5px;top:300.5px;" width="12.3" height="12.3" viewBox="0 0 12.3 12.3"><svg viewBox="0 0 13 13" width="12.300" height="12.300" style="position:static"><path d="M12.600 2.800L10.400 5 8.400 4.600 8 2.600 10.200.4C8.400-.2 6.400.6 5.800 2.400 5.500 3.300 5.600 4.200 6 5L.6 10.400c-.6.600-.6 1.400 0 2s1.400.6 2 0L8 7c1.600.8 3.600.2 4.400-1.400.5-1 .5-2 .2-2.800z" fill="#4d5965"/></svg></svg><span class="t" id="t35" style="left:358.3px;top:301.33px;font-size:16.5px;line-height:16.5px;color:#111;">/</span><svg style="left:663px;top:301px;" width="18" height="13" viewBox="0 0 18 13"><defs><clipPath id="cp663_301"><rect x=".75" y=".75" width="16.500" height="11.500" rx="1.500"/></clipPath></defs><g clip-path="url(#cp663_301)"><rect width="18" height="13" fill="#dcdfe2"/><path d="M18 0V13H2z" fill="#bcc0c5"/></g><rect x=".75" y=".75" width="16.500" height="11.500" rx="1.500" fill="none" stroke="#485665" stroke-width="1.400"/><path d="M3.200 5.300h6.300V2.800l5.300 3.700-5.300 3.700V7.700H3.200z" fill="#485665"/></svg><svg style="left:663px;top:317px;" width="18" height="13" viewBox="0 0 18 13"><defs><clipPath id="cp663_317"><rect x=".75" y=".75" width="16.500" height="11.500" rx="1.500"/></clipPath></defs><g clip-path="url(#cp663_317)"><rect width="18" height="13" fill="#dcdfe2"/><path d="M18 0V13H2z" fill="#bcc0c5"/></g><rect x=".75" y=".75" width="16.500" height="11.500" rx="1.500" fill="none" stroke="#485665" stroke-width="1.400"/></svg><div class="a" style="left:338px;top:332px;width:321px;height:16px;background:#f1f5fa;"></div><div class="a" style="left:660px;top:332px;width:23px;height:16px;background:#f1f2f4;"></div><div class="a" style="left:684px;top:332px;width:322px;height:16px;background:#f5f5f5;"></div><span class="t" id="t36" style="left:339.6px;top:333.92px;font-size:12.5px;line-height:12.5px;color:#33506e;letter-spacing:-0.195px;">2.0</span><svg style="left:663px;top:333px;" width="18" height="13" viewBox="0 0 18 13"><rect width="18" height="13" rx="2.500" fill="#d3d5da"/><path d="M3.500 4.500h11M3.500 8.600h11" stroke="#fff" stroke-width="1.600"/></svg><span class="t" id="t37" style="left:339.6px;top:349.92px;font-size:12.5px;line-height:12.5px;color:#33506e;transform:scaleX(0.9619);transform-origin:0 0;">px</span><svg style="left:663px;top:349px;" width="18" height="13" viewBox="0 0 18 13"><rect width="18" height="13" rx="2.500" fill="#d3d5da"/><path d="M3.500 4.500h11M3.500 8.600h11" stroke="#fff" stroke-width="1.600"/></svg><div class="a" style="left:338px;top:364px;width:321px;height:16px;background:#f1f5fa;"></div><div class="a" style="left:660px;top:364px;width:23px;height:16px;background:#f1f2f4;"></div><div class="a" style="left:684px;top:364px;width:322px;height:16px;background:#f5f5f5;"></div><svg style="left:663px;top:365px;" width="18" height="13" viewBox="0 0 18 13"><defs><clipPath id="cp663_365"><rect x=".75" y=".75" width="16.500" height="11.500" rx="1.500"/></clipPath></defs><g clip-path="url(#cp663_365)"><rect width="18" height="13" fill="#dcdfe2"/><path d="M18 0V13H2z" fill="#bcc0c5"/></g><rect x=".75" y=".75" width="16.500" height="11.500" rx="1.500" fill="none" stroke="#485665" stroke-width="1.400"/></svg><div class="a" style="left:338px;top:380px;width:321px;height:16px;background:#dcdcdc;"></div><div class="a" style="left:660px;top:380px;width:23px;height:16px;background:#e2e2e2;"></div><div class="a" style="left:684px;top:380px;width:323px;height:16px;background:#dedede;border:1px solid #000;"></div><svg style="left:663px;top:381px;" width="18" height="13" viewBox="0 0 18 13"><defs><clipPath id="cp663_381"><rect x=".75" y=".75" width="16.500" height="11.500" rx="1.500"/></clipPath></defs><g clip-path="url(#cp663_381)"><rect width="18" height="13" fill="#dcdfe2"/><path d="M18 0V13H2z" fill="#bcc0c5"/></g><rect x=".75" y=".75" width="16.500" height="11.500" rx="1.500" fill="none" stroke="#485665" stroke-width="1.400"/></svg><div class="a" style="left:338px;top:396px;width:321px;height:16px;background:#f1f5fa;"></div><div class="a" style="left:660px;top:396px;width:23px;height:16px;background:#f1f2f4;"></div><div class="a" style="left:684px;top:396px;width:322px;height:16px;background:#f5f5f5;"></div><span class="t" id="t38" style="left:339.6px;top:397.92px;font-size:12.5px;line-height:12.5px;color:#33506e;letter-spacing:0.888px;">#ffffff</span><svg style="left:663px;top:397px;" width="18" height="13" viewBox="0 0 18 13"><rect width="18" height="13" rx="2.500" fill="#d3d5da"/><path d="M3.500 4.500h11M3.500 8.600h11" stroke="#fff" stroke-width="1.600"/></svg><span class="t" id="t39" style="left:339.6px;top:413.92px;font-size:12.5px;line-height:12.5px;color:#33506e;letter-spacing:-0.031px;">main</span><svg style="left:663px;top:413px;" width="18" height="13" viewBox="0 0 18 13"><rect width="18" height="13" rx="2.500" fill="#d3d5da"/><path d="M3.500 4.500h11M3.500 8.600h11" stroke="#fff" stroke-width="1.600"/></svg><div class="a" style="left:338px;top:428px;width:321px;height:16px;background:#f1f5fa;"></div><div class="a" style="left:660px;top:428px;width:23px;height:16px;background:#f1f2f4;"></div><div class="a" style="left:684px;top:428px;width:322px;height:16px;background:#f5f5f5;"></div><span class="t" id="t40" style="left:339.6px;top:429.92px;font-size:12.5px;line-height:12.5px;color:#33506e;letter-spacing:0.151px;">true</span><svg style="left:663px;top:429px;" width="18" height="13" viewBox="0 0 18 13"><rect width="18" height="13" rx="2.500" fill="#d3d5da"/><path d="M3.500 4.500h11M3.500 8.600h11" stroke="#fff" stroke-width="1.600"/></svg><span class="t" id="t41" style="left:339.6px;top:445.92px;font-size:12.5px;line-height:12.5px;color:#33506e;letter-spacing:0.101px;">vertical</span><svg style="left:663px;top:445px;" width="18" height="13" viewBox="0 0 18 13"><rect width="18" height="13" rx="2.500" fill="#d3d5da"/><path d="M3.500 4.500h11M3.500 8.600h11" stroke="#fff" stroke-width="1.600"/></svg><div class="a" style="left:692px;top:251px;width:1px;height:49px;background-image:repeating-linear-gradient(180deg,#7d7d7d 0 1px,transparent 1px 2px);"></div><div class="a" style="left:693px;top:260px;width:10px;height:1px;background-image:repeating-linear-gradient(90deg,#7d7d7d 0 1px,transparent 1px 2px);"></div><div class="a" style="left:693px;top:276px;width:10px;height:1px;background-image:repeating-linear-gradient(90deg,#7d7d7d 0 1px,transparent 1px 2px);"></div><div class="a" style="left:697px;top:292px;width:6px;height:1px;background-image:repeating-linear-gradient(90deg,#7d7d7d 0 1px,transparent 1px 2px);"></div><div class="a" style="left:697px;top:308px;width:6px;height:1px;background-image:repeating-linear-gradient(90deg,#7d7d7d 0 1px,transparent 1px 2px);"></div><div class="a" style="left:711px;top:316px;width:1px;height:4px;background-image:repeating-linear-gradient(180deg,#7d7d7d 0 1px,transparent 1px 2px);"></div><div class="a" style="left:716px;top:324px;width:6px;height:1px;background-image:repeating-linear-gradient(90deg,#7d7d7d 0 1px,transparent 1px 2px);"></div><div class="a" style="left:730px;top:332px;width:1px;height:35px;background-image:repeating-linear-gradient(180deg,#7d7d7d 0 1px,transparent 1px 2px);"></div><div class="a" style="left:731px;top:340px;width:10px;height:1px;background-image:repeating-linear-gradient(90deg,#7d7d7d 0 1px,transparent 1px 2px);"></div><div class="a" style="left:731px;top:356px;width:10px;height:1px;background-image:repeating-linear-gradient(90deg,#7d7d7d 0 1px,transparent 1px 2px);"></div><div class="a" style="left:735px;top:372px;width:6px;height:1px;background-image:repeating-linear-gradient(90deg,#7d7d7d 0 1px,transparent 1px 2px);"></div><div class="a" style="left:754px;top:388px;width:6px;height:1px;background-image:repeating-linear-gradient(90deg,#7d7d7d 0 1px,transparent 1px 2px);"></div><div class="a" style="left:768px;top:396px;width:1px;height:56px;background-image:repeating-linear-gradient(180deg,#7d7d7d 0 1px,transparent 1px 2px);"></div><div class="a" style="left:769px;top:404px;width:10px;height:1px;background-image:repeating-linear-gradient(90deg,#7d7d7d 0 1px,transparent 1px 2px);"></div><div class="a" style="left:769px;top:420px;width:10px;height:1px;background-image:repeating-linear-gradient(90deg,#7d7d7d 0 1px,transparent 1px 2px);"></div><div class="a" style="left:769px;top:436px;width:10px;height:1px;background-image:repeating-linear-gradient(90deg,#7d7d7d 0 1px,transparent 1px 2px);"></div><div class="a" style="left:769px;top:452px;width:10px;height:1px;background-image:repeating-linear-gradient(90deg,#7d7d7d 0 1px,transparent 1px 2px);"></div><svg style="left:685px;top:237px;" width="14" height="14" viewBox="0 0 14 14"><defs><linearGradient id="gg685_237" x1="0" y1="0" x2="0" y2="1"><stop offset="0" stop-color="#8f959c"/><stop offset=".55" stop-color="#4a5562"/><stop offset="1" stop-color="#36424f"/></linearGradient></defs><path d="M13.88 5.69L13.88 8.31L12.23 8.30L11.62 9.78L12.79 10.93L10.93 12.79L9.78 11.62L8.30 12.23L8.31 13.88L5.69 13.88L5.70 12.23L4.22 11.62L3.07 12.79L1.21 10.93L2.38 9.78L1.77 8.30L0.12 8.31L0.12 5.69L1.77 5.70L2.38 4.22L1.21 3.07L3.07 1.21L4.22 2.38L5.70 1.77L5.69 0.12L8.31 0.12L8.30 1.77L9.78 2.38L10.93 1.21L12.79 3.07L11.62 4.22L12.23 5.70zM4.90 7.00a2.10 2.10 0 1 0 4.20 0a2.10 2.10 0 1 0 -4.20 0z" fill="url(#gg685_237)" fill-rule="evenodd"/></svg><span class="t" id="t42" style="left:704.3px;top:240.02px;font-size:12.5px;line-height:12.5px;color:#b8a83e;font-family:'Liberation Mono',monospace;letter-spacing:.5px;">xsl:</span><span class="t" id="t43" style="left:736.3px;top:240.02px;font-size:12.5px;line-height:12.5px;color:#7d7128;font-family:'Liberation Mono',monospace;letter-spacing:.5px;">stylesheet</span><svg style="left:703px;top:254px;will-change:transform;" width="14.5" height="13" viewBox="0 0 14.5 13"><path d="M.7 4.800L6.200.6l5.500 4.200L6.200 9z" fill="#dfe2e6" stroke="#717a84" stroke-width="1.100"/><rect x="6" y="5.200" width="7.600" height="7.200" fill="#fff" stroke="#485665" stroke-width="1.200"/><text x="9.800" y="11.200" text-anchor="middle" font-family="Liberation Sans,sans-serif" font-size="5.500" font-weight="bold" fill="#8a9299">N</text></svg><span class="t" id="t44" style="left:721px;top:254.92px;font-size:12.5px;line-height:12.5px;color:#333;letter-spacing:-0.241px;">xsl</span><svg style="left:703px;top:270px;will-change:transform;" width="14.5" height="13" viewBox="0 0 14.5 13"><path d="M.7 4.800L6.200.6l5.500 4.200L6.200 9z" fill="#dfe2e6" stroke="#717a84" stroke-width="1.100"/><rect x="6" y="5.200" width="7.600" height="7.200" fill="#fff" stroke="#485665" stroke-width="1.200"/><text x="9.800" y="11.200" text-anchor="middle" font-family="Liberation Sans,sans-serif" font-size="5.500" font-weight="bold" fill="#8a9299">A</text></svg><span class="t" id="t45" style="left:721px;top:270.92px;font-size:12.5px;line-height:12.5px;color:#333;letter-spacing:0.017px;">version</span><svg style="left:688px;top:287px;" width="9" height="9" viewBox="0 0 9 9" shape-rendering="crispEdges"><rect x=".5" y=".5" width="8" height="8" fill="#fff" stroke="#4f5c69"/><path d="M2 4.500h5" stroke="#3a4652"/><path d="M4.500 2v5" stroke="#3a4652"/></svg><svg style="left:704px;top:285px;" width="14" height="14" viewBox="0 0 14 14"><defs><linearGradient id="gg704_285" x1="0" y1="0" x2="0" y2="1"><stop offset="0" stop-color="#8f959c"/><stop offset=".55" stop-color="#4a5562"/><stop offset="1" stop-color="#36424f"/></linearGradient></defs><path d="M13.88 5.69L13.88 8.31L12.23 8.30L11.62 9.78L12.79 10.93L10.93 12.79L9.78 11.62L8.30 12.23L8.31 13.88L5.69 13.88L5.70 12.23L4.22 11.62L3.07 12.79L1.21 10.93L2.38 9.78L1.77 8.30L0.12 8.31L0.12 5.69L1.77 5.70L2.38 4.22L1.21 3.07L3.07 1.21L4.22 2.38L5.70 1.77L5.69 0.12L8.31 0.12L8.30 1.77L9.78 2.38L10.93 1.21L12.79 3.07L11.62 4.22L12.23 5.70zM4.90 7.00a2.10 2.10 0 1 0 4.20 0a2.10 2.10 0 1 0 -4.20 0z" fill="url(#gg704_285)" fill-rule="evenodd"/></svg><div class="a" style="left:720px;top:284px;width:286px;height:16px;overflow:hidden"><span class="t" id="t46" style="left:3.2px;top:4.02px;font-size:12.5px;line-height:12.5px;color:#b8a83e;font-family:'Liberation Mono',monospace;letter-spacing:.5px;">xsl:</span><span class="t" id="t47" style="left:35.2px;top:4.02px;font-size:12.5px;line-height:12.5px;color:#7d7128;font-family:'Liberation Mono',monospace;letter-spacing:.5px;">output (method='xml' encoding='UTF-8')</span></div><svg style="left:688px;top:303px;" width="9" height="9" viewBox="0 0 9 9" shape-rendering="crispEdges"><rect x=".5" y=".5" width="8" height="8" fill="#fff" stroke="#4f5c69"/><path d="M2 4.500h5" stroke="#3a4652"/></svg><svg style="left:704px;top:301px;" width="14" height="14" viewBox="0 0 14 14"><defs><linearGradient id="gg704_301" x1="0" y1="0" x2="0" y2="1"><stop offset="0" stop-color="#8f959c"/><stop offset=".55" stop-color="#4a5562"/><stop offset="1" stop-color="#36424f"/></linearGradient></defs><path d="M13.88 5.69L13.88 8.31L12.23 8.30L11.62 9.78L12.79 10.93L10.93 12.79L9.78 11.62L8.30 12.23L8.31 13.88L5.69 13.88L5.70 12.23L4.22 11.62L3.07 12.79L1.21 10.93L2.38 9.78L1.77 8.30L0.12 8.31L0.12 5.69L1.77 5.70L2.38 4.22L1.21 3.07L3.07 1.21L4.22 2.38L5.70 1.77L5.69 0.12L8.31 0.12L8.30 1.77L9.78 2.38L10.93 1.21L12.79 3.07L11.62 4.22L12.23 5.70zM4.90 7.00a2.10 2.10 0 1 0 4.20 0a2.10 2.10 0 1 0 -4.20 0z" fill="url(#gg704_301)" fill-rule="evenodd"/></svg><span class="t" id="t48" style="left:723.2px;top:304.02px;font-size:12.5px;line-height:12.5px;color:#b8a83e;font-family:'Liberation Mono',monospace;letter-spacing:.5px;">xsl:</span><span class="t" id="t49" style="left:755.2px;top:304.02px;font-size:12.5px;line-height:12.5px;color:#7d7128;font-family:'Liberation Mono',monospace;letter-spacing:.5px;">template</span><svg style="left:707px;top:319px;" width="9" height="9" viewBox="0 0 9 9" shape-rendering="crispEdges"><rect x=".5" y=".5" width="8" height="8" fill="#fff" stroke="#4f5c69"/><path d="M2 4.500h5" stroke="#3a4652"/></svg><svg style="left:721.6px;top:316.8px;" width="13.5" height="13" viewBox="0 0 13.5 13"><path d="M.5 6.500L6.700.4l6.200 6.100-6.200 6.100z" fill="#eceef0" stroke="#d3d7db" stroke-width=".8"/><path d="M5.100 2.700L1.400 6.500l3.700 3.800M8.300 2.700L12 6.500 8.300 10.300" fill="none" stroke="#79838d" stroke-width="1.300"/><rect x="4.900" y="5.900" width="1.300" height="1.300" fill="#929aa2"/><rect x="7.200" y="5.900" width="1.300" height="1.300" fill="#929aa2"/></svg><span class="t" id="t50" style="left:740.4px;top:318.92px;font-size:12.5px;line-height:12.5px;color:#000;letter-spacing:0.009px;">Form</span><svg style="left:741.5px;top:334px;will-change:transform;" width="14.5" height="13" viewBox="0 0 14.5 13"><path d="M.7 4.800L6.200.6l5.500 4.200L6.200 9z" fill="#dfe2e6" stroke="#717a84" stroke-width="1.100"/><rect x="6" y="5.200" width="7.600" height="7.200" fill="#fff" stroke="#485665" stroke-width="1.200"/><text x="9.800" y="11.200" text-anchor="middle" font-family="Liberation Sans,sans-serif" font-size="5.500" font-weight="bold" fill="#8a9299">A</text></svg><span class="t" id="t51" style="left:759.4px;top:334.92px;font-size:12.5px;line-height:12.5px;color:#444;letter-spacing:-0.049px;">version</span><svg style="left:741.5px;top:350px;will-change:transform;" width="14.5" height="13" viewBox="0 0 14.5 13"><path d="M.7 4.800L6.200.6l5.500 4.200L6.200 9z" fill="#dfe2e6" stroke="#717a84" stroke-width="1.100"/><rect x="6" y="5.200" width="7.600" height="7.200" fill="#fff" stroke="#485665" stroke-width="1.200"/><text x="9.800" y="11.200" text-anchor="middle" font-family="Liberation Sans,sans-serif" font-size="5.500" font-weight="bold" fill="#8a9299">A</text></svg><span class="t" id="t52" style="left:759.4px;top:350.92px;font-size:12.5px;line-height:12.5px;color:#444;letter-spacing:0.334px;">metric</span><svg style="left:726px;top:367px;" width="9" height="9" viewBox="0 0 9 9" shape-rendering="crispEdges"><rect x=".5" y=".5" width="8" height="8" fill="#fff" stroke="#4f5c69"/><path d="M2 4.500h5" stroke="#3a4652"/></svg><svg style="left:740.8px;top:364.8px;" width="13.5" height="13" viewBox="0 0 13.5 13"><path d="M.5 6.500L6.700.4l6.200 6.100-6.200 6.100z" fill="#eceef0" stroke="#d3d7db" stroke-width=".8"/><path d="M5.100 2.700L1.400 6.500l3.700 3.800M8.300 2.700L12 6.500 8.300 10.300" fill="none" stroke="#79838d" stroke-width="1.300"/><rect x="4.900" y="5.900" width="1.300" height="1.300" fill="#929aa2"/><rect x="7.200" y="5.900" width="1.300" height="1.300" fill="#929aa2"/></svg><span class="t" id="t53" style="left:759.4px;top:366.92px;font-size:12.5px;line-height:12.5px;color:#000;letter-spacing:-0.160px;">Request</span><svg style="left:745px;top:383px;" width="9" height="9" viewBox="0 0 9 9" shape-rendering="crispEdges"><rect x=".5" y=".5" width="8" height="8" fill="#fff" stroke="#4f5c69"/><path d="M2 4.500h5" stroke="#3a4652"/></svg><svg style="left:760.2px;top:380.8px;" width="13.5" height="13" viewBox="0 0 13.5 13"><path d="M.5 6.500L6.700.4l6.200 6.100-6.200 6.100z" fill="#8cbdf7" stroke="#b4d4fa" stroke-width=".8"/><path d="M5.100 2.700L1.400 6.500l3.700 3.800M8.300 2.700L12 6.500 8.300 10.300" fill="none" stroke="#2b7be4" stroke-width="1.300"/><rect x="4.900" y="5.900" width="1.300" height="1.300" fill="#2b7be4"/><rect x="7.200" y="5.900" width="1.300" height="1.300" fill="#2b7be4"/></svg><span class="t" id="t54" style="left:778.7px;top:382.92px;font-size:12.5px;line-height:12.5px;color:#000;transform:scaleX(0.9286);transform-origin:0 0;">Panel</span><svg style="left:779.5px;top:398px;will-change:transform;" width="14.5" height="13" viewBox="0 0 14.5 13"><path d="M.7 4.800L6.200.6l5.500 4.200L6.200 9z" fill="#dfe2e6" stroke="#717a84" stroke-width="1.100"/><rect x="6" y="5.200" width="7.600" height="7.200" fill="#fff" stroke="#485665" stroke-width="1.200"/><text x="9.800" y="11.200" text-anchor="middle" font-family="Liberation Sans,sans-serif" font-size="5.500" font-weight="bold" fill="#8a9299">A</text></svg><span class="t" id="t55" style="left:797.9px;top:398.92px;font-size:12.5px;line-height:12.5px;color:#444;letter-spacing:-0.036px;">background</span><svg style="left:779.5px;top:414px;will-change:transform;" width="14.5" height="13" viewBox="0 0 14.5 13"><path d="M.7 4.800L6.200.6l5.500 4.200L6.200 9z" fill="#dfe2e6" stroke="#717a84" stroke-width="1.100"/><rect x="6" y="5.200" width="7.600" height="7.200" fill="#fff" stroke="#485665" stroke-width="1.200"/><text x="9.800" y="11.200" text-anchor="middle" font-family="Liberation Sans,sans-serif" font-size="5.500" font-weight="bold" fill="#8a9299">A</text></svg><span class="t" id="t56" style="left:797.9px;top:414.92px;font-size:12.5px;line-height:12.5px;color:#444;letter-spacing:-0.094px;">name</span><svg style="left:779.5px;top:430px;will-change:transform;" width="14.5" height="13" viewBox="0 0 14.5 13"><path d="M.7 4.800L6.200.6l5.500 4.200L6.200 9z" fill="#dfe2e6" stroke="#717a84" stroke-width="1.100"/><rect x="6" y="5.200" width="7.600" height="7.200" fill="#fff" stroke="#485665" stroke-width="1.200"/><text x="9.800" y="11.200" text-anchor="middle" font-family="Liberation Sans,sans-serif" font-size="5.500" font-weight="bold" fill="#8a9299">A</text></svg><span class="t" id="t57" style="left:797.9px;top:430.92px;font-size:12.5px;line-height:12.5px;color:#444;letter-spacing:0.297px;">start</span><svg style="left:779.5px;top:446px;will-change:transform;" width="14.5" height="13" viewBox="0 0 14.5 13"><path d="M.7 4.800L6.200.6l5.500 4.200L6.200 9z" fill="#dfe2e6" stroke="#717a84" stroke-width="1.100"/><rect x="6" y="5.200" width="7.600" height="7.200" fill="#fff" stroke="#485665" stroke-width="1.200"/><text x="9.800" y="11.200" text-anchor="middle" font-family="Liberation Sans,sans-serif" font-size="5.500" font-weight="bold" fill="#8a9299">A</text></svg><span class="t" id="t58" style="left:797.9px;top:446.92px;font-size:12.5px;line-height:12.5px;color:#444;letter-spacing:0.163px;">orientation</span><svg style="left:339.8px;top:503px;" width="11.4" height="6" viewBox="0 0 11.4 6"><path d="M0 6 L5.7 0 L11.4 6z" fill="#000"/></svg><svg style="left:351px;top:503px;" width="12" height="6" viewBox="0 0 12 6"><path d="M0 0H12L6 6z" fill="#000"/></svg><div class="a" style="left:337px;top:509px;width:671px;height:1px;background:#6d6d6d;"></div><div class="a" style="left:338px;top:510px;width:670px;height:1px;background:#fafafa;"></div><div class="a" style="left:339px;top:512px;width:175px;height:70px;background:#fff;border:1px solid #b4bcc4;"></div><div class="a" style="left:340px;top:513px;width:173px;height:68px;background:#fff;border:1px solid #76828e;"></div><div class="a" style="left:341px;top:514px;width:171px;height:20px;background:#f0f0f0;"></div><div class="a" style="left:341px;top:533px;width:171px;height:1px;background:#b4bcc4;"></div><div class="a" style="left:341px;top:534px;width:171px;height:1px;background:#76828e;"></div><svg style="left:342.6px;top:519px;" width="10.5" height="8" viewBox="0 0 10.5 8" shape-rendering="crispEdges"><path d="M0 1h10.500M0 4h10.500M0 7h10.500" stroke="#485665" stroke-width="2"/></svg><div class="a" style="left:359px;top:520px;width:1px;height:6px;background:#909090;"></div><svg style="left:365px;top:517px;" width="11" height="12" viewBox="0 0 11 12"><g fill="#929292" shape-rendering="crispEdges"><rect x="0" y="0" width="3" height="3"/><rect x="3" y="3" width="3" height="3"/><path d="M1 3h1v2H1zM2 4h1v1H2zM5 6h1v6H5z"/><path d="M7 7h1.600v1H7zM9.400 7H11v1H9.400zM7 9h1.600v1H7zM9.400 9H11v1H9.400zM7 11h1.600v1H7zM9.400 11H11v1H9.400z"/></g></svg><svg style="left:380px;top:515px;" width="12" height="16" viewBox="0 0 12 16"><g fill="none" stroke="#485665" stroke-width="1.200"><path d="M.6 15.400V.6h7l3.800 3.800v11z"/><path d="M7.400.8v3.800h3.800"/></g><path d="M3 4.500h3M3 7.500h6.500M3 9.500h6.500M3 11.500h6.500M3 13.500h4.500" stroke="#485665" stroke-width="1" shape-rendering="crispEdges"/></svg><svg style="left:397px;top:515px;will-change:transform;" width="14" height="16" viewBox="0 0 14 16"><g fill="none" stroke="#485665" stroke-width="1.200"><path d="M2.500 15.400H.6V.6h7l3.800 3.800v4"/><path d="M7.400.8v3.800h3.800"/></g><path d="M3 4.500h3M3 7.500h6" stroke="#485665" stroke-width="1" shape-rendering="crispEdges"/><text x="2.600" y="15.600" font-family="Liberation Mono,monospace" font-size="7" font-weight="bold" fill="#485665" stroke="#485665" stroke-width=".25" textLength="11.400" lengthAdjust="spacingAndGlyphs">HEX</text></svg><svg style="left:414px;top:515px;" width="14" height="16" viewBox="0 0 14 16"><g fill="none" stroke="#485665" stroke-width="1.200"><path d="M2.600 6.500V.6h7l3.800 3.800v11H2.600v-3.500"/><path d="M9.400.8v3.800h3.800"/></g><path d="M5 4.500h3M8 7.500h3.500M9 9.500h2.500M8 11.500h3.500M5 13.500h4" stroke="#485665" stroke-width="1" shape-rendering="crispEdges"/><path d="M0 8.500h4V6.200l3.800 3.300L4 12.800V10.500H0z" fill="#485665"/></svg><div class="a" style="left:433px;top:520px;width:1px;height:6px;background:#909090;"></div><svg style="left:438.8px;top:516px;" width="14" height="14" viewBox="0 0 14 14"><svg viewBox="0 0 14 14" width="14" height="14" style="position:static"><circle cx="5.4" cy="5.4" r="4.1" fill="none" stroke="#485665" stroke-width="2"/><path d="M8.6 8.6l4.2 4.2" stroke="#485665" stroke-width="2.6" stroke-linecap="round"/></svg></svg><div class="a" style="left:450px;top:514px;width:62px;height:19px;overflow:hidden"><span class="t" id="t59" style="left:6.7px;top:5.11px;font-size:10.5px;line-height:10.5px;color:#000;letter-spacing:-0.298px;">XML-Quelldaten</span></div><svg style="left:341.8px;top:585px;" width="11.4" height="5.8" viewBox="0 0 11.4 5.8"><path d="M0 5.8 L5.7 0 L11.4 5.8z" fill="#000"/></svg><svg style="left:353px;top:585px;" width="12.2" height="5.8" viewBox="0 0 12.2 5.8"><path d="M0 0H12.2L6.1 5.8z" fill="#000"/></svg><div class="a" style="left:339px;top:592px;width:175px;height:74px;background:#fff;border:1px solid #6d6d6d;"></div><div class="a" style="left:340px;top:593px;width:173px;height:1px;background:#8e8e8e;"></div><div class="a" style="left:340px;top:594px;width:43px;height:21px;background:#f0f0f0;border:2px solid #a0a0a0;border-left-color:#fff;border-top-color:#fff;border-left-width:1px;border-top-width:1px;"></div><div class="a" style="left:383px;top:594px;width:31px;height:21px;background:#f0f0f0;border:2px solid #a0a0a0;border-left-color:#fff;border-top-color:#fff;border-left-width:1px;border-top-width:1px;"></div><div class="a" style="left:414px;top:594px;width:99px;height:21px;background:#f0f0f0;border:2px solid #a0a0a0;border-left-color:#fff;border-top-color:#fff;border-left-width:1px;border-top-width:1px;"></div><span class="t" id="t60" style="left:345.2px;top:599.12px;font-size:12.5px;line-height:12.5px;color:#000;letter-spacing:-0.315px;">Name</span><span class="t" id="t61" style="left:388.1px;top:599.12px;font-size:12.5px;line-height:12.5px;color:#000;letter-spacing:0.172px;">Typ</span><span class="t" id="t62" style="left:449.5px;top:599.12px;font-size:12.5px;line-height:12.5px;color:#000;letter-spacing:0.443px;">Wert</span><div class="a" style="left:337px;top:666px;width:178px;height:4px;background:#fff;"></div><div class="a" style="left:339px;top:670px;width:89px;height:21px;background:#f0f0f0;border:1px solid #d9d9d9;"></div><span class="t" id="t63" style="left:345.2px;top:675.22px;font-size:12.5px;line-height:12.5px;color:#000;letter-spacing:-0.086px;">Eigenschaften</span><div class="a" style="left:427px;top:670px;width:49px;height:22.5px;background:#fff;border:1px solid #e2e2e2;border-top:none;"></div><span class="t" id="t64" style="left:434.2px;top:677.32px;font-size:12.5px;line-height:12.5px;color:#000;letter-spacing:-0.168px;">Quelle</span><div class="a" style="left:343px;top:696px;width:119px;height:19px;background:#f6f3f1;border:1px solid #8c8c8c;border-radius:2px;"></div><span class="t" id="t65" style="left:347.3px;top:699.92px;font-size:12.5px;line-height:12.5px;color:#000;letter-spacing:0.083px;">Debugging/Profiling</span><svg style="left:517.5px;top:513px;" width="5" height="7.5" viewBox="0 0 5 7.5"><path d="M5 0V7.5L0 3.75z" fill="#000"/></svg><svg style="left:517.5px;top:525px;" width="5" height="7.5" viewBox="0 0 5 7.5"><path d="M0 0V7.5L5 3.75z" fill="#000"/></svg><div class="a" style="left:522px;top:510px;width:1px;height:184px;background:#6d6d6d;"></div><div class="a" style="left:523px;top:510px;width:1px;height:184px;background:#fafafa;"></div><svg style="left:527px;top:518px;" width="14" height="8" viewBox="0 0 14 8"><rect x=".5" y=".5" width="13" height="7" fill="#fff" stroke="#485665" shape-rendering="crispEdges"/></svg><svg style="left:548px;top:517px;" width="10" height="10" viewBox="0 0 10 10"><rect x=".5" y=".5" width="9" height="9" fill="#f6f6f6" stroke="#485665" shape-rendering="crispEdges"/><path d="M3.200 3.200l3.600 3.600M6.800 3.200L3.200 6.800" stroke="#485665" stroke-width="1"/></svg><svg style="left:565px;top:515px;" width="14" height="14" viewBox="0 0 14 14"><rect x=".5" y=".5" width="13" height="13" fill="#f6f6f6" stroke="#485665" shape-rendering="crispEdges"/><circle cx="7" cy="7" r="4.300" fill="none" stroke="#485665" stroke-width="1"/><circle cx="7" cy="7" r="2.400" fill="#485665"/></svg><svg style="left:584px;top:517px;will-change:transform;" width="14" height="10" viewBox="0 0 14 10"><rect width="14" height="10" fill="#fff"/><text x="7" y="7.8" text-anchor="middle" font-family="Liberation Sans,sans-serif" font-size="7" font-weight="bold" fill="#222">L...</text></svg><svg style="left:603px;top:517px;will-change:transform;" width="15" height="10" viewBox="0 0 15 10"><rect x=".5" y=".5" width="14" height="9" fill="#fff" stroke="#485665" shape-rendering="crispEdges"/><text x="7.5" y="7.6" text-anchor="middle" font-family="Liberation Sans,sans-serif" font-size="6.5" font-weight="bold" fill="#222">T...</text></svg><svg style="left:622px;top:517px;will-change:transform;" width="15" height="10" viewBox="0 0 15 10"><rect x=".5" y=".5" width="14" height="9" fill="#fff" stroke="#485665" shape-rendering="crispEdges"/><text x="5.8" y="7.8" text-anchor="middle" font-family="Liberation Sans,sans-serif" font-size="7" font-weight="bold" fill="#222">✱</text><path d="M11 2.500v5" stroke="#222" stroke-width="1.200"/></svg><svg style="left:641px;top:517px;will-change:transform;" width="15" height="10" viewBox="0 0 15 10"><rect x=".5" y=".5" width="14" height="9" fill="#fff" stroke="#485665" shape-rendering="crispEdges"/><text x="7.5" y="7.6" text-anchor="middle" font-family="Liberation Sans,sans-serif" font-size="6.5" font-weight="bold" fill="#222">F...</text></svg><svg style="left:660px;top:515px;will-change:transform;" width="14" height="14" viewBox="0 0 14 14"><rect x=".5" y=".5" width="13" height="13" fill="#fff" stroke="#485665" stroke-width="1" shape-rendering="crispEdges"/><text x="4.200" y="6.500" text-anchor="middle" font-family="Liberation Sans,sans-serif" font-size="5.500" fill="#485665">A</text><path d="M7 3.500h5M7 5.500h5M2 8.500h10M2 10.500h10" stroke="#485665" stroke-width="1" shape-rendering="crispEdges"/></svg><svg style="left:679px;top:515px;will-change:transform;" width="14" height="14" viewBox="0 0 14 14"><rect x=".5" y=".5" width="13" height="13" fill="#fff" stroke="#485665" stroke-width="1" shape-rendering="crispEdges"/><path d="M.5 2.500h13" stroke="#485665" stroke-width="1" shape-rendering="crispEdges"/><rect x="10" y="0" width="3" height="3" fill="#8a929a"/><path d="M3 5.500h8M3 7.500h8M3 9.500h8M3 11.500h8" stroke="#485665" stroke-width="1" shape-rendering="crispEdges"/></svg><svg style="left:698px;top:515px;will-change:transform;" width="14" height="14" viewBox="0 0 14 14"><rect x=".5" y=".5" width="13" height="13" fill="#fff" stroke="#485665" stroke-width="1" shape-rendering="crispEdges"/><rect x="10" y="1" width="3" height="12" fill="#8a929a"/><path d="M2 3.500h2M2 5.500h2M2 7.500h2M2 9.500h2M2 11.500h2" stroke="#d0107a" stroke-width="1" shape-rendering="crispEdges"/><path d="M5 3.500h4M5 5.500h4M5 7.500h4M5 9.500h4M5 11.500h4" stroke="#485665" stroke-width="1" shape-rendering="crispEdges"/></svg><svg style="left:717px;top:515px;will-change:transform;" width="14" height="14" viewBox="0 0 14 14"><rect x=".5" y=".5" width="13" height="13" fill="#fff" stroke="#485665" stroke-width="1" shape-rendering="crispEdges"/><g fill="#485665" shape-rendering="crispEdges"><rect x="3" y="2" width="3" height="3"/><rect x="6" y="5" width="3" height="3"/><path d="M4 5h1v2H4zM8 8h1v4H8z"/><path d="M9 9h2v1H9zM9 11h2v1H9z"/></g></svg><svg style="left:736px;top:515px;will-change:transform;" width="14" height="14" viewBox="0 0 14 14"><rect x=".5" y=".5" width="13" height="13" fill="none" stroke="#485665" stroke-width="1" stroke-dasharray="2 1" shape-rendering="crispEdges"/><g fill="#485665" shape-rendering="crispEdges"><rect x="3" y="3" width="2" height="2"/><rect x="6" y="5" width="2" height="2"/><rect x="9" y="9" width="2" height="2"/></g></svg><svg style="left:755px;top:515px;will-change:transform;" width="14" height="14" viewBox="0 0 14 14"><rect x=".5" y=".5" width="13" height="13" fill="none" stroke="#485665" stroke-width="1" stroke-dasharray="2 1" shape-rendering="crispEdges"/><g fill="#485665"><rect x="2.7" y="2.7" width="1.600" height="1.600"/><rect x="2.7" y="5.1" width="1.600" height="1.600"/><rect x="2.7" y="7.5" width="1.600" height="1.600"/><rect x="2.7" y="9.9" width="1.600" height="1.600"/><rect x="5.1" y="2.7" width="1.600" height="1.600"/><rect x="5.1" y="5.1" width="1.600" height="1.600"/><rect x="5.1" y="7.5" width="1.600" height="1.600"/><rect x="5.1" y="9.9" width="1.600" height="1.600"/><rect x="7.5" y="2.7" width="1.600" height="1.600"/><rect x="7.5" y="5.1" width="1.600" height="1.600"/><rect x="7.5" y="7.5" width="1.600" height="1.600"/><rect x="7.5" y="9.9" width="1.600" height="1.600"/><rect x="9.9" y="2.7" width="1.600" height="1.600"/><rect x="9.9" y="5.1" width="1.600" height="1.600"/><rect x="9.9" y="7.5" width="1.600" height="1.600"/><rect x="9.9" y="9.9" width="1.600" height="1.600"/></g></svg><svg style="left:774px;top:515px;will-change:transform;" width="14" height="14" viewBox="0 0 14 14"><rect x=".5" y=".5" width="13" height="13" fill="none" stroke="#485665" stroke-width="1" stroke-dasharray="2 1" shape-rendering="crispEdges"/><path d="M4.300 3v8M7 3v8M9.700 3v8" stroke="#485665" stroke-width="1.900"/></svg><svg style="left:793px;top:515px;will-change:transform;" width="14" height="14" viewBox="0 0 14 14"><rect x=".5" y=".5" width="13" height="13" fill="none" stroke="#485665" stroke-width="1" stroke-dasharray="2 1" shape-rendering="crispEdges"/><path d="M3 4.300h8M3 7h8M3 9.700h8" stroke="#485665" stroke-width="1.900"/></svg><svg style="left:812px;top:515px;will-change:transform;" width="14" height="14" viewBox="0 0 14 14"><rect x=".5" y=".5" width="13" height="13" fill="#fff" stroke="#485665" stroke-width="1" shape-rendering="crispEdges"/><path d="M3.500 3.500l7 7" stroke="#66727e" stroke-width="1.200"/><path d="M2.200 2.200h4.300l-4.300 4.300zM11.800 11.800H7.500l4.300-4.300z" fill="#66727e"/></svg><svg style="left:831px;top:515px;will-change:transform;" width="14" height="14" viewBox="0 0 14 14"><rect x=".5" y=".5" width="13" height="13" fill="#fff" stroke="#485665" stroke-width="1" shape-rendering="crispEdges"/><path d="M3.500 7h7" stroke="#66727e" stroke-width="1.300"/><path d="M1.800 7l3.400-2.800v5.600zM12.200 7L8.800 4.200v5.600z" fill="#66727e"/></svg><svg style="left:850px;top:515px;will-change:transform;" width="14" height="14" viewBox="0 0 14 14"><rect x=".5" y=".5" width="13" height="13" fill="#fff" stroke="#485665" stroke-width="1" shape-rendering="crispEdges"/><path d="M7 3.500v7" stroke="#66727e" stroke-width="1.300"/><path d="M7 1.800L4.200 5.200h5.600zM7 12.200L4.200 8.800h5.600z" fill="#66727e"/></svg><svg style="left:870px;top:520px;" width="12" height="5" viewBox="0 0 12 5"><rect x=".6" y=".6" width="10.800" height="3.800" rx=".8" fill="#fff" stroke="#485665" stroke-width="1.200"/></svg><svg style="left:889px;top:516px;will-change:transform;" width="14" height="12" viewBox="0 0 14 12"><rect x=".5" y=".5" width="13" height="11" fill="#fff" stroke="#485665" stroke-width="1" shape-rendering="crispEdges"/><path d="M1.200 10.200l3.600-6.200 2.800 3.600-1.600 2.600z" fill="#4caf32"/><path d="M5.800 10.200l4.200-5 2.800 2.600v2.400z" fill="#1e90d8"/><circle cx="10.300" cy="3" r="1.500" fill="#e8202a"/></svg><svg style="left:910px;top:515.8px;" width="12.4" height="12.4" viewBox="0 0 12.4 12.4"><circle cx="6.200" cy="6.200" r="6.100" fill="#4f5b68"/><path d="M2.200 1.800L3.500 1.200 3.900 2.300 2.600 3z" fill="#f4f5f6"/><path d="M1.600 5.700C3 5 4.600 5.800 6.300 6.900L5.500 8.300 4.300 8.500 3.700 10.400 2.900 9.700 2.600 7.700z" fill="#f4f5f6"/><path d="M8 2.300L9.500 2.500 10.700 4.100 10.400 5.300 9 4.500z" fill="#f4f5f6"/></svg><div class="a" style="left:926px;top:514px;width:1px;height:17px;background:#444;"></div><span class="t" id="t66" style="left:928px;top:517.93px;font-size:10px;line-height:10px;color:#000;transform:scaleX(0.8533);transform-origin:0 0;">Panel:</span><div class="a" style="left:956px;top:512px;width:42px;height:21px;background:#e1e1e1;border:1px solid #adadad;"></div><span class="t" id="t67" style="left:960.2px;top:517.93px;font-size:10px;line-height:10px;color:#000;letter-spacing:-0.157px;">m...</span><svg style="left:983.5px;top:520px;" width="10" height="6" viewBox="0 0 10 6"><path d="M.4.4l4.600 4.600L9.600.4" fill="none" stroke="#333" stroke-width="1.100"/></svg><svg style="left:1000px;top:515px;" width="5" height="14" viewBox="0 0 5 14"><path d="M.6 13.400V.6h4.400M.6 3h4.400M3 3v10.400" fill="none" stroke="#485665" stroke-width="1.200"/></svg><div class="a" style="left:525px;top:533px;width:480px;height:110px;background:#fff;border:1px solid #858585;"></div><div class="a" style="left:526px;top:534px;width:478px;height:108px;background:#fff;border:1px solid #f408f4;"></div><div class="a" style="left:525px;top:643px;width:479px;height:22px;background:#f0f0f0;border:1px solid #a0a0a0;border-top:none;"></div><span class="t" id="t68" style="left:527.1px;top:649.83px;font-size:10px;line-height:10px;color:#000;transform:scaleX(0.8816);transform-origin:0 0;">Widgets:</span><svg style="left:567px;top:646px;" width="15" height="13" viewBox="0 0 15 13"><rect x=".6" y=".6" width="13.800" height="11.800" rx="1.500" fill="#fff" stroke="#5b8fd0" stroke-width="1.200"/><rect x="1.200" y="1.200" width="12.600" height="1.900" fill="#a9c6ea"/><rect x="2.300" y="4.15" width="1.100" height="1.100" fill="#3b7fd6"/><path d="M4.400 4.7h8.200" stroke="#8a9098" stroke-width=".9"/><rect x="2.300" y="6.15" width="1.100" height="1.100" fill="#3b7fd6"/><path d="M4.400 6.7h8.200" stroke="#8a9098" stroke-width=".9"/><rect x="2.300" y="8.15" width="1.100" height="1.100" fill="#3b7fd6"/><path d="M4.400 8.7h8.200" stroke="#8a9098" stroke-width=".9"/><rect x="2.300" y="10.15" width="1.100" height="1.100" fill="#3b7fd6"/><path d="M4.400 10.7h8.200" stroke="#8a9098" stroke-width=".9"/></svg><svg style="left:589px;top:646px;will-change:transform;" width="14.5" height="14.5" viewBox="0 0 14.5 14.5"><rect x=".5" y="2" width="13.500" height="12" fill="#fff" stroke="#b0b0b0" stroke-width="1"/><rect x=".5" y="1" width="13.500" height="4.500" fill="#d42020"/><rect x="3" y="0" width="2" height="3" fill="#fff"/><rect x="9.500" y="0" width="2" height="3" fill="#fff"/><text x="7" y="12.300" text-anchor="middle" font-family="Liberation Sans,sans-serif" font-size="6.500" fill="#888">17</text></svg><svg style="left:609px;top:646.5px;" width="15.5" height="12.5" viewBox="0 0 15.5 12.5"><rect x=".6" y=".6" width="14.300" height="11.300" rx="1" fill="#fbfdff" stroke="#4a86c8" stroke-width="1.200"/><path d="M1.200 2.200h13.100" stroke="#a9c6ea" stroke-width="2"/><path d="M0 0" stroke="#4a86c8"/><path d="M2.500 6h2.500M2.500 9h2.500" stroke="#4a86c8" stroke-width="1.200"/><path d="M6.500 6h6M6.500 9h6" stroke="#a8c4e4" stroke-width="1.600"/></svg><svg style="left:630px;top:648px;" width="17" height="13" viewBox="0 0 17 13"><rect x=".5" y="1.500" width="14" height="6" fill="#fff" stroke="#c8c8c8" stroke-width="1"/><path d="M2.500 3v3" stroke="#aaa" stroke-width="1"/><circle cx="12.500" cy="6" r="3.200" fill="#f7c352" stroke="#dda032" stroke-width=".7"/><path d="M10.500 8l-4.500 4.500 1.800.4.400-1.400 1.400-.2.400-1.400 1.500-.3z" fill="#f7c352" stroke="#dda032" stroke-width=".6"/><circle cx="13.400" cy="5.200" r=".9" fill="#fff"/></svg><svg style="left:651px;top:649.5px;" width="15.5" height="7" viewBox="0 0 15.5 7"><rect x=".5" y=".5" width="14.500" height="6" fill="#fff" stroke="#c4c4c4" stroke-width="1"/><path d="M2.500 2v3" stroke="#aaa" stroke-width="1"/></svg><svg style="left:673px;top:646.5px;" width="14" height="13.5" viewBox="0 0 14 13.5"><rect x=".6" y=".6" width="12.800" height="12.300" rx="1" fill="#f7fafe" stroke="#5b8fd0" stroke-width="1.200"/><path d="M1.200 2.200h11.600" stroke="#7ab86a" stroke-width="1.600"/><path d="M2.500 5.500h9M2.500 7.600h9M2.500 9.700h9M2.500 11.600h9M5.300 4.500v8M8.800 4.500v8" stroke="#8ab4e4" stroke-width=".9"/></svg><div class="a" style="left:524px;top:665px;width:482px;height:5px;background:#fff;"></div><div class="a" style="left:523px;top:670px;width:64px;height:23px;background:#fff;border:1px solid #e2e2e2;border-top:none;"></div><span class="t" id="t69" style="left:530.7px;top:676.82px;font-size:12.5px;line-height:12.5px;color:#000;letter-spacing:-0.190px;">Designer</span><div class="a" style="left:586px;top:670.5px;width:60px;height:20px;background:#f0f0f0;border:1px solid #d9d9d9;"></div><span class="t" id="t70" style="left:592.6px;top:675.32px;font-size:12.5px;line-height:12.5px;color:#000;letter-spacing:-0.163px;">Ergebnis</span><div class="a" style="left:645px;top:670.5px;width:70px;height:20px;background:#f0f0f0;border:1px solid #d9d9d9;"></div><span class="t" id="t71" style="left:652.2px;top:675.32px;font-size:12.5px;line-height:12.5px;color:#000;letter-spacing:0.352px;">Templates</span><div class="a" style="left:3px;top:738px;width:326px;height:17px;background:#f0f0f0;border:1px solid #dadada;border-right-color:#fff;border-bottom-color:#fff;"></div><div class="a" style="left:333px;top:738px;width:241px;height:17px;background:#f0f0f0;border:1px solid #dadada;border-right-color:#fff;border-bottom-color:#fff;"></div><div class="a" style="left:577px;top:738px;width:449px;height:17px;background:#f0f0f0;border:1px solid #dadada;border-right-color:#fff;border-bottom-color:#fff;"></div><span class="t" id="t72" style="left:6.6px;top:742.49px;font-size:11px;line-height:11px;color:#000;letter-spacing:-0.045px;">Benutzer: jh (root) [System Administrator]</span><span class="t" id="t73" style="left:337.9px;top:742.49px;font-size:11px;line-height:11px;color:#000;letter-spacing:-0.118px;">Benutzergruppe: admin</span><span class="t" id="t74" style="left:582.4px;top:742.49px;font-size:11px;line-height:11px;color:#000;letter-spacing:-0.147px;">URL: http://localhost:8000/ibis/servlet/IBISSoapServlet (BE6Z009R)</span><div class="a" style="left:0px;top:0px;width:1029px;height:1px;background:#8a8a8a;"></div><div class="a" style="left:0px;top:0px;width:1px;height:757px;background:#6f6f6f;"></div><div class="a" style="left:1028px;top:0px;width:1px;height:757px;background:#6f6f6f;"></div><div class="a" style="left:0px;top:756px;width:1029px;height:1px;background:#6f6f6f;"></div>
</body></html>
